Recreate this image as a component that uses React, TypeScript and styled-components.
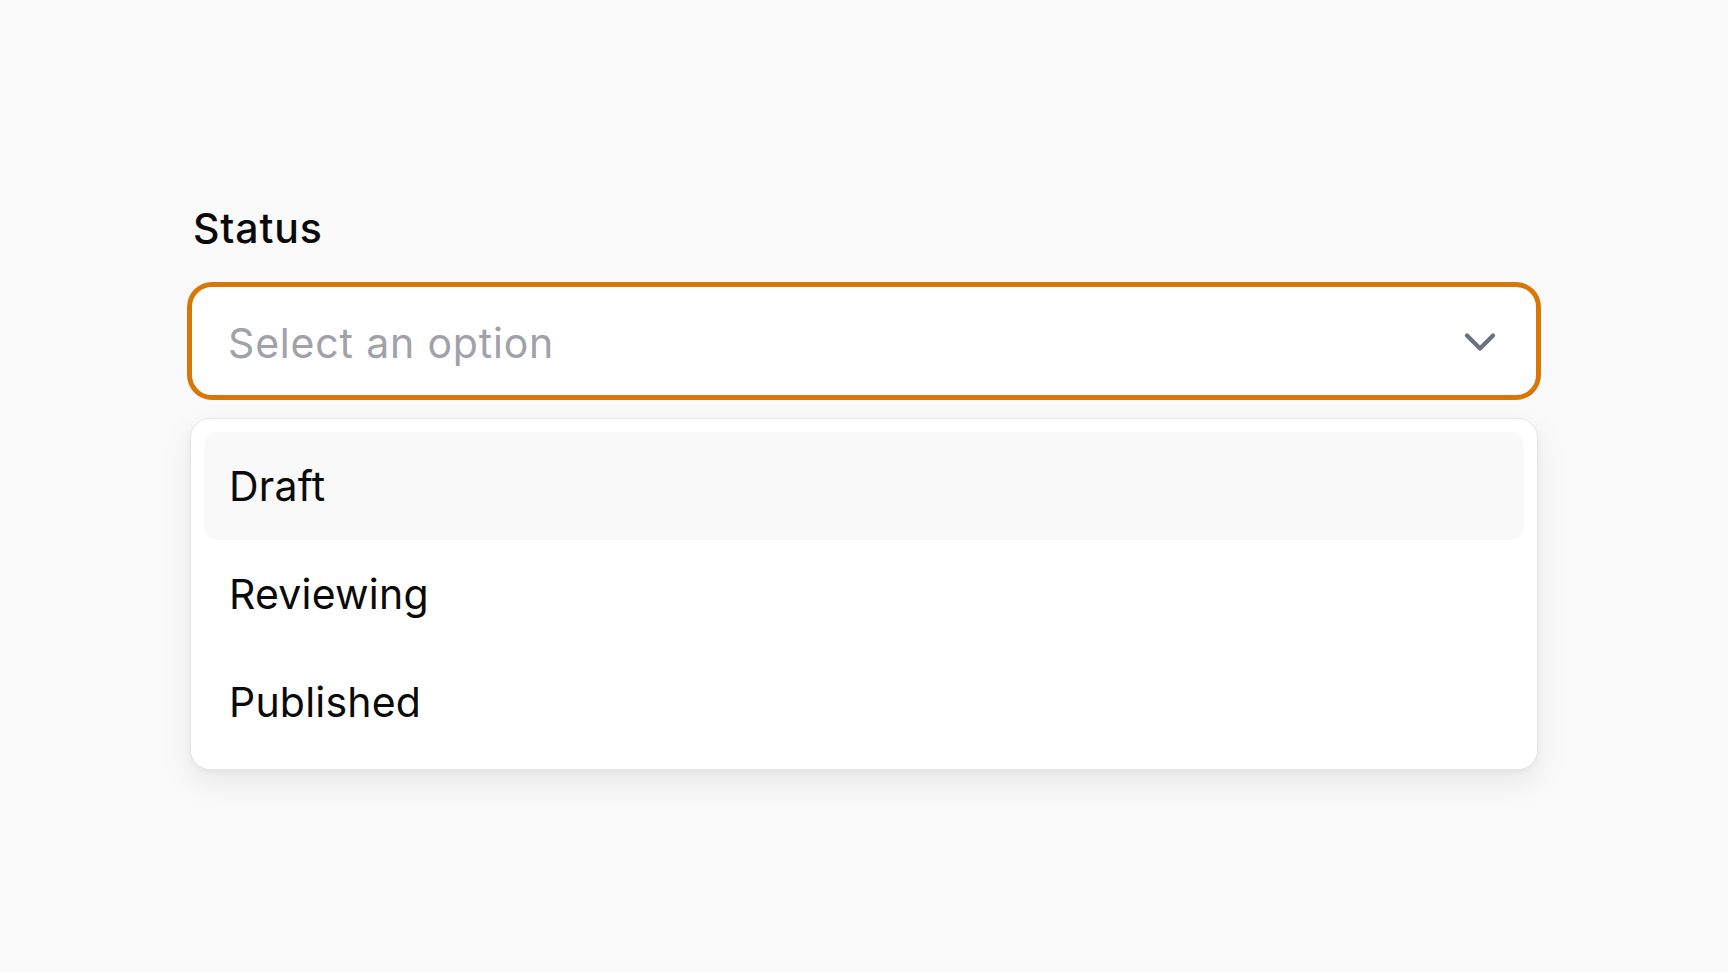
import styled, { createGlobalStyle } from 'styled-components';
import { ChevronDown } from 'lucide-react';

const options = ['Draft', 'Reviewing', 'Published'];

export default function App() {
    return (
        <>
            <GlobalStyle />
            <Page>
                <Field>
                    <Label>Status</Label>
                    <Trigger>
                        <Placeholder>Select an option</Placeholder>
                        <ChevronDown size={52} strokeWidth={2} color="#6b7280" />
                    </Trigger>
                    <Menu>
                        {options.map((option, i) => (
                            <Item key={option} $active={i === 0}>
                                {option}
                            </Item>
                        ))}
                    </Menu>
                </Field>
            </Page>
        </>
    );
}

const GlobalStyle = createGlobalStyle`
    * {
        box-sizing: border-box;
    }
    html, body {
        margin: 0;
        background: #fafafa;
        font-family: Inter, "Noto Sans", sans-serif;
        color: #111111;
        letter-spacing: 0.013em;
    }
`;

const Page = styled.div`
    min-height: 972px;
    padding: 198px 190px 0;
`;

const Field = styled.div`
    display: flex;
    flex-direction: column;
    width: 1348px;
`;

const Label = styled.label`
    font-size: 41px;
    line-height: 60px;
    font-weight: 500;
    color: #0a0a0a;
    letter-spacing: 0.02em;
    margin: 0 0 27px 3px;
`;

const Trigger = styled.button`
    display: flex;
    align-items: center;
    justify-content: space-between;
    height: 112px;
    padding: 2px 30px 0 36px;
    background: #ffffff;
    border: 2px solid #d97706;
    border-radius: 22px;
    box-shadow: 0 0 0 3px #d97706;
    font: inherit;
    letter-spacing: inherit;
    cursor: pointer;
    text-align: left;
`;

const Placeholder = styled.span`
    font-size: 41px;
    line-height: 60px;
    color: #a1a1aa;
    letter-spacing: 0.02em;
    padding-top: 2px;
`;

const Menu = styled.div`
    display: flex;
    flex-direction: column;
    margin-top: 21px;
    padding: 13px;
    background: #ffffff;
    border: 1px solid #e7e7e7;
    border-radius: 20px;
    box-shadow: 0 12px 32px rgba(0, 0, 0, 0.08), 0 2px 6px rgba(0, 0, 0, 0.04);
`;

const Item = styled.div<{ $active?: boolean }>`
    display: flex;
    align-items: center;
    height: 108px;
    padding: 0 25px;
    border-radius: 14px;
    font-size: 41px;
    line-height: 60px;
    color: #0a0a0a;
    background: ${({ $active }) => ($active ? '#f9f9f9' : 'transparent')};
    cursor: pointer;
`;
